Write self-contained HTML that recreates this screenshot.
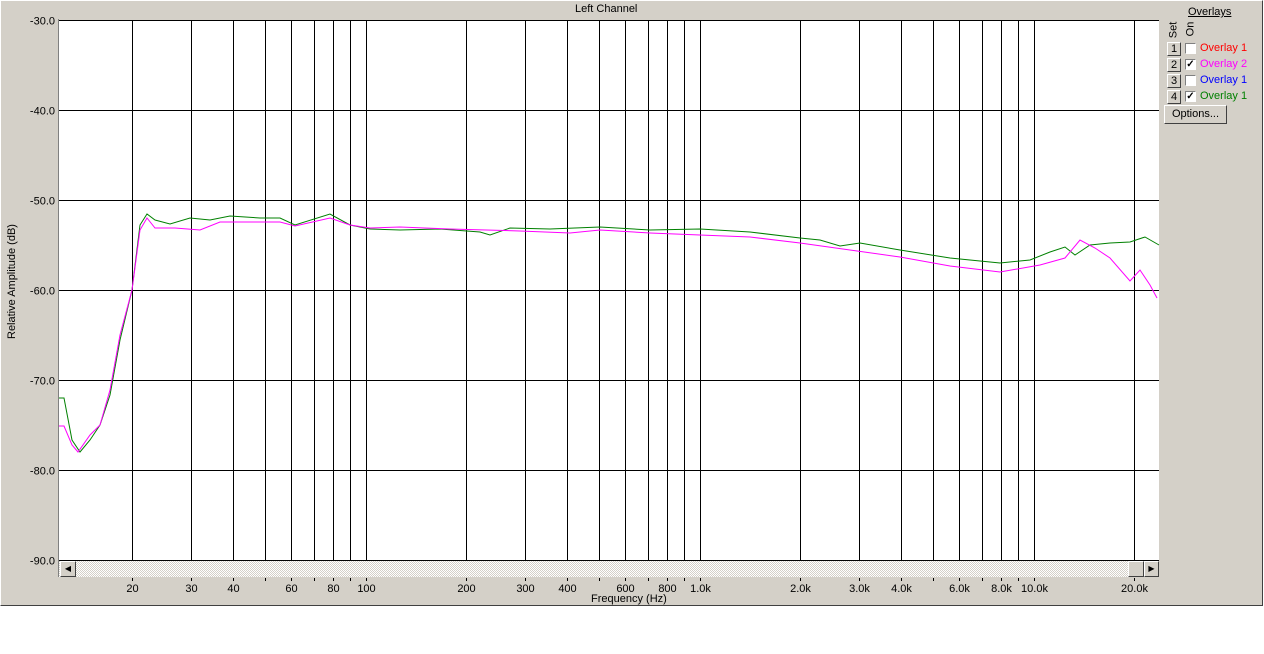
<!DOCTYPE html>
<html><head><style>
body{margin:0;width:1264px;height:654px;background:#fff;position:relative;overflow:hidden;font-family:"Liberation Sans",sans-serif;font-size:11px;}
#panel{position:absolute;left:0;top:0;width:1261px;height:604px;background:#d4d0c8;border-right:1px solid #404040;border-bottom:1px solid #404040;border-left:1px solid #fff;border-top:1px solid #fff;box-sizing:content-box}
.t{position:absolute;white-space:nowrap;color:#000}
.btn{position:absolute;background:#d4d0c8;border-top:1px solid #fff;border-left:1px solid #fff;border-right:1px solid #404040;border-bottom:1px solid #404040;box-sizing:border-box;text-align:center;line-height:12px}
.cb{position:absolute;width:11px;height:11px;background:#fff;border-top:1px solid #808080;border-left:1px solid #808080;border-right:1px solid #fff;border-bottom:1px solid #fff;box-sizing:border-box;font-size:10px;line-height:9px;text-align:center;font-weight:bold}
</style></head><body>
<div id="panel"></div>
<div class="t" style="left:575px;top:3px">Left Channel</div>
<div class="t" style="left:-38px;top:283px;transform:rotate(-90deg);width:100px;text-align:center">Relative Amplitude (dB)</div>
<div class="t" style="left:591px;top:593px">Frequency (Hz)</div>
<svg style="position:absolute;left:0;top:0" width="1264" height="654">
<rect x="59" y="20" width="1100" height="540" fill="#fff"/>
<line x1="58.5" y1="19" x2="58.5" y2="577" stroke="#808080"/>
<g stroke="#000" stroke-width="1" id="grid"></g>
<defs><pattern id="d" width="2" height="2" patternUnits="userSpaceOnUse"><rect width="2" height="2" fill="#fff"/><rect width="1" height="1" fill="#d4d0c8"/><rect x="1" y="1" width="1" height="1" fill="#d4d0c8"/></pattern></defs>
<rect x="59" y="561" width="1100" height="16" fill="url(#d)"/>
<g id="ticks" stroke="#000"></g>
<g id="lbl" font-family="Liberation Sans" font-size="11" text-anchor="end"></g>
<polyline fill="none" stroke="#008000" points="59,398 64,398 72,440 80,452 90,440 100,425 110,395 120,340 132,290 140,225 147,214 155,220 170,224 190,218 210,220 230,216 260,218 280,218 295,225 330,214 350,225 370,229 400,230 440,229 480,232 490,235 510,228 550,229 600,227 650,230 700,229 750,232 800,238 820,240 840,246 860,243 900,250 950,258 1000,263 1030,260 1050,252 1065,247 1075,255 1090,245 1110,243 1130,242 1145,237 1159,245"/>
<polyline fill="none" stroke="#ff00ff" points="59,426 64,426 72,445 78,452 90,435 100,425 110,390 120,335 132,290 140,230 147,218 155,228 175,228 200,230 220,222 240,222 280,222 295,226 330,218 350,225 370,228 400,227 450,229 520,231 570,233 600,230 650,233 700,235 750,237 800,243 850,250 900,257 950,266 1000,272 1040,265 1065,258 1080,240 1095,248 1110,258 1130,281 1140,270 1150,285 1157,298"/>
</svg>
<div class="btn" style="left:60px;top:561px;width:16px;height:16px;font-size:8px;line-height:14px">◀</div>
<div class="btn" style="left:1128px;top:561px;width:16px;height:16px"></div>
<div class="btn" style="left:1144px;top:561px;width:15px;height:16px;font-size:8px;line-height:14px">▶</div>
<div class="t" style="left:1188px;top:6px;text-decoration:underline">Overlays</div>
<div class="t" style="left:1165px;top:24px;transform:rotate(-90deg);font-size:11px">Set</div>
<div class="t" style="left:1183px;top:23px;transform:rotate(-90deg);font-size:11px">On</div>
<div class="btn" style="left:1167px;top:42px;width:14px;height:14px">1</div>
<div class="cb" style="left:1185px;top:43px"></div>
<div class="t" style="left:1200px;top:42px;color:#ff0000">Overlay 1</div>
<div class="btn" style="left:1167px;top:58px;width:14px;height:14px">2</div>
<div class="cb" style="left:1185px;top:59px">✓</div>
<div class="t" style="left:1200px;top:58px;color:#ff00ff">Overlay 2</div>
<div class="btn" style="left:1167px;top:74px;width:14px;height:14px">3</div>
<div class="cb" style="left:1185px;top:75px"></div>
<div class="t" style="left:1200px;top:74px;color:#0000ff">Overlay 1</div>
<div class="btn" style="left:1167px;top:90px;width:14px;height:14px">4</div>
<div class="cb" style="left:1185px;top:91px">✓</div>
<div class="t" style="left:1200px;top:90px;color:#008000">Overlay 1</div>
<div class="btn" style="left:1164px;top:105px;width:63px;height:19px;line-height:16px">Options...</div>
<script>
var g=document.getElementById('grid'),tk=document.getElementById('ticks'),lb=document.getElementById('lbl'),ns="http://www.w3.org/2000/svg";
function L(p,a){var e=document.createElementNS(ns,'line');for(var k in a)e.setAttribute(k,a[k]);p.appendChild(e);}
function T(s,x,y,anc){var e=document.createElementNS(ns,'text');e.setAttribute('x',x);e.setAttribute('y',y);if(anc)e.setAttribute('text-anchor',anc);e.textContent=s;lb.appendChild(e);}
for(var i=0;i<7;i++){var y=20.5+i*90;L(g,{x1:59,y1:y,x2:1159,y2:y});T('-'+(30+i*10)+'.0',55,y+4);}
var fs=[20,30,40,50,60,70,80,90,100,200,300,400,500,600,700,800,900,1000,2000,3000,4000,5000,6000,7000,8000,9000,10000,20000];
var labs={20:'20',30:'30',40:'40',60:'60',80:'80',100:'100',200:'200',300:'300',400:'400',600:'600',800:'800',1000:'1.0k',2000:'2.0k',3000:'3.0k',4000:'4.0k',6000:'6.0k',8000:'8.0k',10000:'10.0k',20000:'20.0k'};
fs.forEach(function(f){var x=Math.floor(366+334*Math.log10(f/100))+0.5;L(g,{x1:x,y1:20,x2:x,y2:560});L(tk,{x1:x,y1:578,x2:x,y2:581});if(labs[f])T(labs[f],x,592,'middle');});
</script>
</body></html>
